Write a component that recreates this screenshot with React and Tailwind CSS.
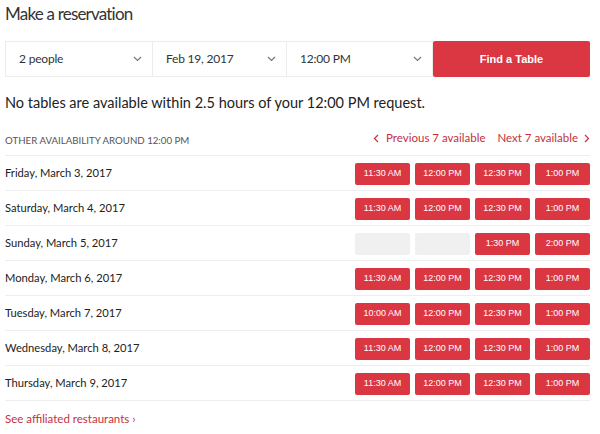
import React from "react";

const rows = [
  { day: "Friday, March 3, 2017", times: ["11:30 AM", "12:00 PM", "12:30 PM", "1:00 PM"] },
  { day: "Saturday, March 4, 2017", times: ["11:30 AM", "12:00 PM", "12:30 PM", "1:00 PM"] },
  { day: "Sunday, March 5, 2017", times: [null, null, "1:30 PM", "2:00 PM"] },
  { day: "Monday, March 6, 2017", times: ["11:30 AM", "12:00 PM", "12:30 PM", "1:00 PM"] },
  { day: "Tuesday, March 7, 2017", times: ["10:00 AM", "12:00 PM", "12:30 PM", "1:00 PM"] },
  { day: "Wednesday, March 8, 2017", times: ["11:30 AM", "12:00 PM", "12:30 PM", "1:00 PM"] },
  { day: "Thursday, March 9, 2017", times: ["11:30 AM", "12:00 PM", "12:30 PM", "1:00 PM"] },
];

const Chevron = () => (
  <svg width="9" height="6" viewBox="0 0 9 6" fill="none">
    <path d="M1 1l3.5 3.5L8 1" stroke="#777" strokeWidth="1.2" />
  </svg>
);

const Select = ({ label, width }) => (
  <div className={`flex items-center justify-between border border-[#ececec] -ml-px first:ml-0 pl-[13px] pr-[10px] ${width}`}>
    <span className="text-[12px] tracking-[-0.2px] text-[#333]">{label}</span>
    <Chevron />
  </div>
);

export default function App() {
  return (
    <div className="w-[600px] h-[434px] bg-white pl-[5px] pr-[10px] font-['Lato',sans-serif] text-[#333] overflow-hidden">
      <h1 className="pt-[2px] text-[17px] leading-[24px] tracking-[-0.8px] text-[#333]">Make a reservation</h1>

      {/* search form */}
      <div className="mt-[15px] flex h-[36px]">
        <Select label="2 people" width="w-[148px]" />
        <Select label="Feb 19, 2017" width="w-[135px]" />
        <Select label="12:00 PM" width="w-[147px]" />
        <button className="flex-1 bg-[#da3743] rounded-[2px] text-white text-[11px] font-bold font-['Liberation_Sans',sans-serif]">
          Find a Table
        </button>
      </div>

      <p className="mt-[16px] text-[14.5px] leading-[20px] text-[#222]">
        No tables are available within 2.5 hours of your 12:00 PM request.
      </p>

      <div className="mt-[12px] flex items-center justify-between h-[31px] border-b border-[#eeeeee]">
        <span className="text-[9.7px] uppercase text-[#555]">Other availability around 12:00 PM</span>
        <div className="flex items-center gap-[12px] text-[11.5px] text-[#c6313c] -mt-[4px]">
          <span className="flex items-center gap-[7px]">
            <svg width="6" height="9" viewBox="0 0 6 9" fill="none">
              <path d="M5 1L1.5 4.5 5 8" stroke="#c6313c" strokeWidth="1.2" />
            </svg>
            Previous 7 available
          </span>
          <span className="flex items-center gap-[6px]">
            Next 7 available
            <svg width="6" height="9" viewBox="0 0 6 9" fill="none">
              <path d="M1 1l3.5 3.5L1 8" stroke="#c6313c" strokeWidth="1.2" />
            </svg>
          </span>
        </div>
      </div>

      {rows.map((row, i) => (
        <div key={i} className="flex items-center justify-between h-[35px] border-b border-[#eeeeee]">
          <span className="text-[11.2px] text-[#222]">{row.day}</span>
          <div className="flex gap-[5px] pt-[1px]">
            {row.times.map((t, j) =>
              t ? (
                <button
                  key={j}
                  className="w-[55px] h-[22px] rounded-[2px] bg-[#da3743] text-white text-[9px] font-['Liberation_Sans',sans-serif]"
                >
                  {t}
                </button>
              ) : (
                <div key={j} className="w-[55px] h-[22px] rounded-[2px] bg-[#f0f0f0]" />
              )
            )}
          </div>
        </div>
      ))}

      <a className="block mt-[9px] text-[11.5px] text-[#c6313c]">See affiliated restaurants ›</a>
    </div>
  );
}
